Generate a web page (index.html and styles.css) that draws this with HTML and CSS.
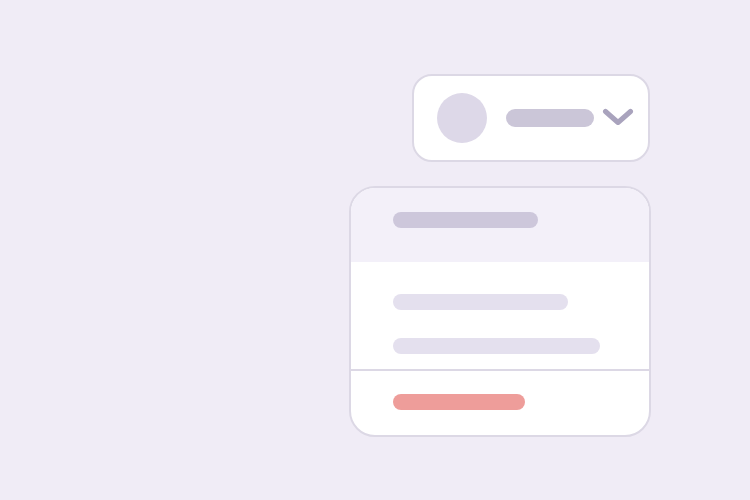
FILE: index.html
```html
<!DOCTYPE html>
<html lang="en">
<head>
<meta charset="utf-8">
<title>Account menu</title>
<link rel="stylesheet" href="styles.css">
</head>
<body>
<main class="stage">
  <div class="trigger">
    <span class="avatar"></span>
    <span class="bar bar-name"></span>
    <svg class="chevron" width="32" height="18" viewBox="0 0 32 18" aria-hidden="true">
      <path d="M3.5 3.5 L16 14.5 L28.5 3.5" fill="none" stroke="#a9a3bd" stroke-width="5" stroke-linecap="round" stroke-linejoin="round"/>
    </svg>
  </div>
  <div class="menu">
    <div class="menu-head">
      <span class="bar bar-head"></span>
    </div>
    <div class="menu-body">
      <span class="bar bar-item1"></span>
      <span class="bar bar-item2"></span>
    </div>
    <div class="menu-foot">
      <span class="bar bar-danger"></span>
    </div>
  </div>
</main>
</body>
</html>
```
FILE: styles.css
```css
html, body {
  margin: 0;
  padding: 0;
  background: #f0ecf6;
  font-family: "Liberation Sans", Arial, sans-serif;
}
.stage {
  width: 302px;
  margin-left: 349px;
  padding-top: 74px;
  display: flex;
  flex-direction: column;
  align-items: flex-end;
  gap: 24px;
}
.trigger {
  box-sizing: border-box;
  width: 238px;
  height: 88px;
  margin-right: 1px;
  background: #ffffff;
  border: 2px solid #dcd8e5;
  border-radius: 20px;
  display: flex;
  align-items: center;
  padding-left: 23px;
}
.avatar {
  width: 50px;
  height: 50px;
  border-radius: 50%;
  background: #ddd8e8;
  flex: none;
}
.bar {
  display: block;
  border-radius: 9px;
  height: 16px;
}
.bar-name {
  width: 88px;
  height: 18px;
  margin-left: 19px;
  background: #cbc6d8;
}
.chevron {
  margin-left: 8px;
  margin-top: -2px;
  flex: none;
}
.menu {
  box-sizing: border-box;
  width: 302px;
  height: 251px;
  background: #ffffff;
  border: 2px solid #dcd8e5;
  border-radius: 26px;
  overflow: hidden;
  display: flex;
  flex-direction: column;
}
.menu-head {
  height: 74px;
  background: #f3f0f9;
  padding: 24px 0 0 42px;
  box-sizing: border-box;
}
.bar-head {
  width: 145px;
  background: #cdc7db;
}
.menu-body {
  box-sizing: border-box;
  height: 109px;
  padding: 32px 0 0 42px;
  display: flex;
  flex-direction: column;
  gap: 28px;
  border-bottom: 2px solid #dcd8e5;
}
.bar-item1 {
  width: 175px;
  background: #e4e0ee;
}
.bar-item2 {
  width: 207px;
  background: #e4e0ee;
}
.menu-foot {
  padding: 23px 0 0 42px;
}
.bar-danger {
  width: 132px;
  background: #ee9d9a;
}
```
